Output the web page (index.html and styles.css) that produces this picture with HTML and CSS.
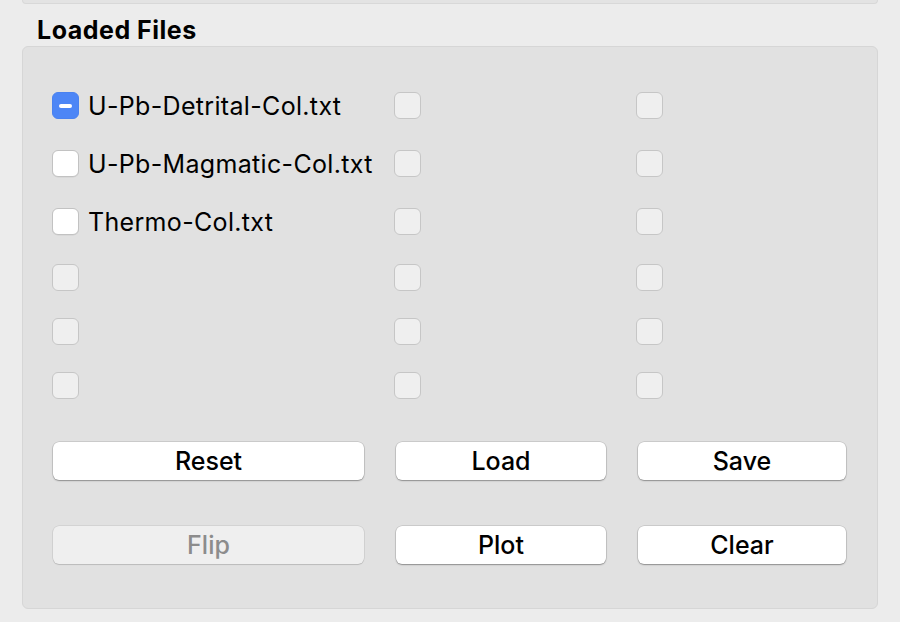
FILE: index.html
```html
<!DOCTYPE html>
<html>
<head>
<meta charset="utf-8">
<link rel="stylesheet" href="styles.css">
</head>
<body>
<div class="window">
  <div class="top-panel"></div>
  <div class="title">Loaded Files</div>
  <div class="group">
    <div class="grid">
      <label class="cell"><span class="cb cb-mixed"><span class="dash"></span></span><span class="name">U-Pb-Detrital-Col.txt</span></label>
      <div class="cell"><span class="cb cb-off"></span></div>
      <div class="cell"><span class="cb cb-off"></span></div>

      <label class="cell"><span class="cb cb-on"></span><span class="name">U-Pb-Magmatic-Col.txt</span></label>
      <div class="cell"><span class="cb cb-off"></span></div>
      <div class="cell"><span class="cb cb-off"></span></div>

      <label class="cell"><span class="cb cb-on"></span><span class="name">Thermo-Col.txt</span></label>
      <div class="cell"><span class="cb cb-off"></span></div>
      <div class="cell"><span class="cb cb-off"></span></div>

      <div class="cell"><span class="cb cb-off"></span></div>
      <div class="cell"><span class="cb cb-off"></span></div>
      <div class="cell"><span class="cb cb-off"></span></div>

      <div class="cell"><span class="cb cb-off"></span></div>
      <div class="cell"><span class="cb cb-off"></span></div>
      <div class="cell"><span class="cb cb-off"></span></div>

      <div class="cell"><span class="cb cb-off"></span></div>
      <div class="cell"><span class="cb cb-off"></span></div>
      <div class="cell"><span class="cb cb-off"></span></div>
    </div>
    <div class="buttons">
      <button class="btn">Reset</button>
      <button class="btn">Load</button>
      <button class="btn">Save</button>
      <button class="btn btn-disabled" disabled>Flip</button>
      <button class="btn">Plot</button>
      <button class="btn">Clear</button>
    </div>
  </div>
</div>
</body>
</html>
```
FILE: styles.css
```css
html, body {
  margin: 0;
  padding: 0;
  background: #ececec;
  width: 900px;
  height: 622px;
  overflow: hidden;
  font-family: Inter, "Liberation Sans", sans-serif;
  color: #000;
}

.window {
  display: flex;
  flex-direction: column;
  padding: 0 22px 0 22px;
}

.top-panel {
  height: 3px;
  background: #e3e3e3;
  border: 1px solid #d8d8d8;
  border-top: none;
  border-radius: 0 0 5px 5px;
}

.title {
  font-weight: 700;
  font-size: 25px;
  line-height: 28px;
  height: 42px;
  padding: 12px 0 0 15px;
  box-sizing: border-box;
  letter-spacing: 0.5px;
}

.group {
  background: #e1e1e1;
  border: 1px solid #d6d6d6;
  border-radius: 6px;
  padding: 45px 30px 44px 29px;
  height: 563px;
  box-sizing: border-box;
}

.grid {
  display: grid;
  grid-template-columns: 312px 212px 210px;
  column-gap: 30px;
  grid-template-rows: 58px 58px 56px 54px 54px 54px;
}

.cell {
  display: flex;
  align-items: flex-start;
  gap: 9px;
}

.cb {
  width: 27px;
  height: 27px;
  box-sizing: border-box;
  border-radius: 6px;
  flex: none;
  display: flex;
  align-items: center;
  justify-content: center;
}

.cb-off {
  background: #efefef;
  border: 1px solid #c6c6c6;
}

.cb-on {
  background: #ffffff;
  border: 1px solid #c2c2c2;
  box-shadow: 0 0.5px 0.5px rgba(0, 0, 0, 0.08);
}

.cb-mixed {
  background: #4d86f6;
  border: 1px solid #4a82f0;
}

.dash {
  width: 13px;
  height: 4px;
  border-radius: 2px;
  background: #ffffff;
}

.name {
  font-size: 25px;
  line-height: 28px;
  letter-spacing: 0.33px;
  white-space: nowrap;
}

.buttons {
  margin-top: 16px;
  display: grid;
  grid-template-columns: 311px 210px 208px;
  column-gap: 32px;
  row-gap: 46px;
  padding-left: 1px;
}

.btn {
  height: 38px;
  background: #ffffff;
  border: none;
  border-radius: 6px;
  box-shadow: 0 0 0 0.5px rgba(0, 0, 0, 0.18), 0 1px 1.5px rgba(0, 0, 0, 0.3);
  font-family: Inter, "Liberation Sans", sans-serif;
  font-size: 25px;
  font-weight: 500;
  color: #000;
  padding: 0;
  line-height: 38px;
}

.btn-disabled {
  background: #efefef;
  color: #8c8c8c;
  box-shadow: 0 0 0 0.5px rgba(0, 0, 0, 0.12), 0 1px 1px rgba(0, 0, 0, 0.12);
}
```
